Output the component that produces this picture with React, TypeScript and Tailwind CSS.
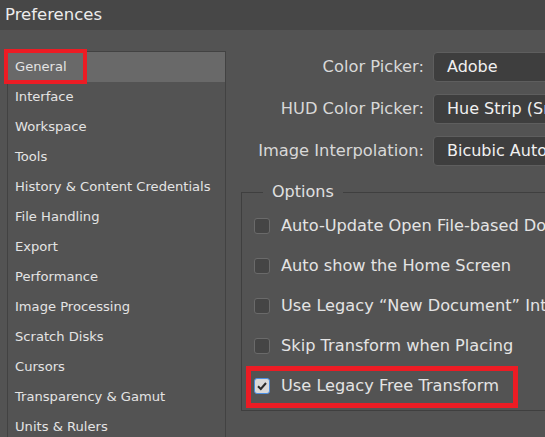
import React from "react";

const sections = [
  "General",
  "Interface",
  "Workspace",
  "Tools",
  "History & Content Credentials",
  "File Handling",
  "Export",
  "Performance",
  "Image Processing",
  "Scratch Disks",
  "Cursors",
  "Transparency & Gamut",
  "Units & Rulers",
];

const pickers = [
  { label: "Color Picker:", value: "Adobe" },
  { label: "HUD Color Picker:", value: "Hue Strip (Small)" },
  { label: "Image Interpolation:", value: "Bicubic Automatic" },
];

const options = [
  { label: "Auto-Update Open File-based Documents", checked: false },
  { label: "Auto show the Home Screen", checked: false },
  { label: "Use Legacy “New Document” Interface", checked: false },
  { label: "Skip Transform when Placing", checked: false },
  { label: "Use Legacy Free Transform", checked: true },
];

function Checkbox({ checked }: { checked: boolean }) {
  if (checked) {
    return (
      <div className="w-4 h-4 shrink-0 rounded-[3px] border border-[#4a8de0] bg-[#d9d9d9] flex items-center justify-center">
        <svg viewBox="0 0 12 12" className="w-3 h-3">
          <path d="M2 6.2 L4.8 9 L10 3" fill="none" stroke="#2b2b2b" strokeWidth="2" />
        </svg>
      </div>
    );
  }
  return <div className="w-4 h-4 shrink-0 rounded-[3px] border border-[#6a6a6a] bg-[#454545]" />;
}

export default function App() {
  return (
    <div
      className="w-[545px] h-[437px] overflow-hidden bg-[#535353] text-[#e4e4e4]"
      style={{ fontFamily: "Tahoma, 'DejaVu Sans', sans-serif" }}
    >
      {/* Title bar */}
      <div className="h-[30px] bg-[#474747] pl-[5px] flex items-center text-[16.5px] text-[#ececec]">
        Preferences
      </div>

      <div className="flex">
        {/* Sidebar */}
        <div className="relative ml-[7px] mt-[21px] w-[219px] shrink-0 border border-[#424242] border-b-0">
          {sections.map((s, i) => (
            <div
              key={s}
              className={`h-[30px] pl-[7px] flex items-center text-[13.1px] whitespace-nowrap ${
                i === 0 ? "bg-[#696969]" : ""
              }`}
            >
              {s}
            </div>
          ))}
          <div className="absolute left-[-4px] top-[-3px] w-[83px] h-[35px] border-4 border-[#ec1c24]" />
        </div>

        {/* Right panel */}
        <div className="flex-1 min-w-0 pt-[22px]">
          <div className="flex flex-col gap-[12px]">
            {pickers.map((p) => (
              <div key={p.label} className="flex items-center h-[30px]">
                <div className="w-[198px] shrink-0 text-right text-[16.3px] text-[#d8d8d8] whitespace-nowrap">
                  {p.label}
                </div>
                <div className="ml-[9px] w-[200px] shrink-0 h-[30px] rounded-[4px] border border-[#5e5e5e] bg-[#3e3e3e] pl-[13px] flex items-center text-[16px] whitespace-nowrap text-[#f0f0f0]">
                  {p.value}
                </div>
              </div>
            ))}
          </div>

          <fieldset className="relative mt-[14px] ml-[15px] w-[340px] h-[231px] border border-[#3f3f3f] pl-[12px] pt-[2px]">
            <legend className="ml-[9px] px-[9px] text-[16px] text-[#e0e0e0]">Options</legend>
            <div className="flex flex-col">
              {options.map((o) => (
                <div key={o.label} className="h-[40px] flex items-center gap-[11px] text-[16.2px] whitespace-nowrap">
                  <Checkbox checked={o.checked} />
                  <span>{o.label}</span>
                </div>
              ))}
            </div>
            <div className="absolute left-[4px] top-[162px] w-[272px] h-[42px] border-[5px] border-[#ec1c24]" />
          </fieldset>
        </div>
      </div>
    </div>
  );
}
